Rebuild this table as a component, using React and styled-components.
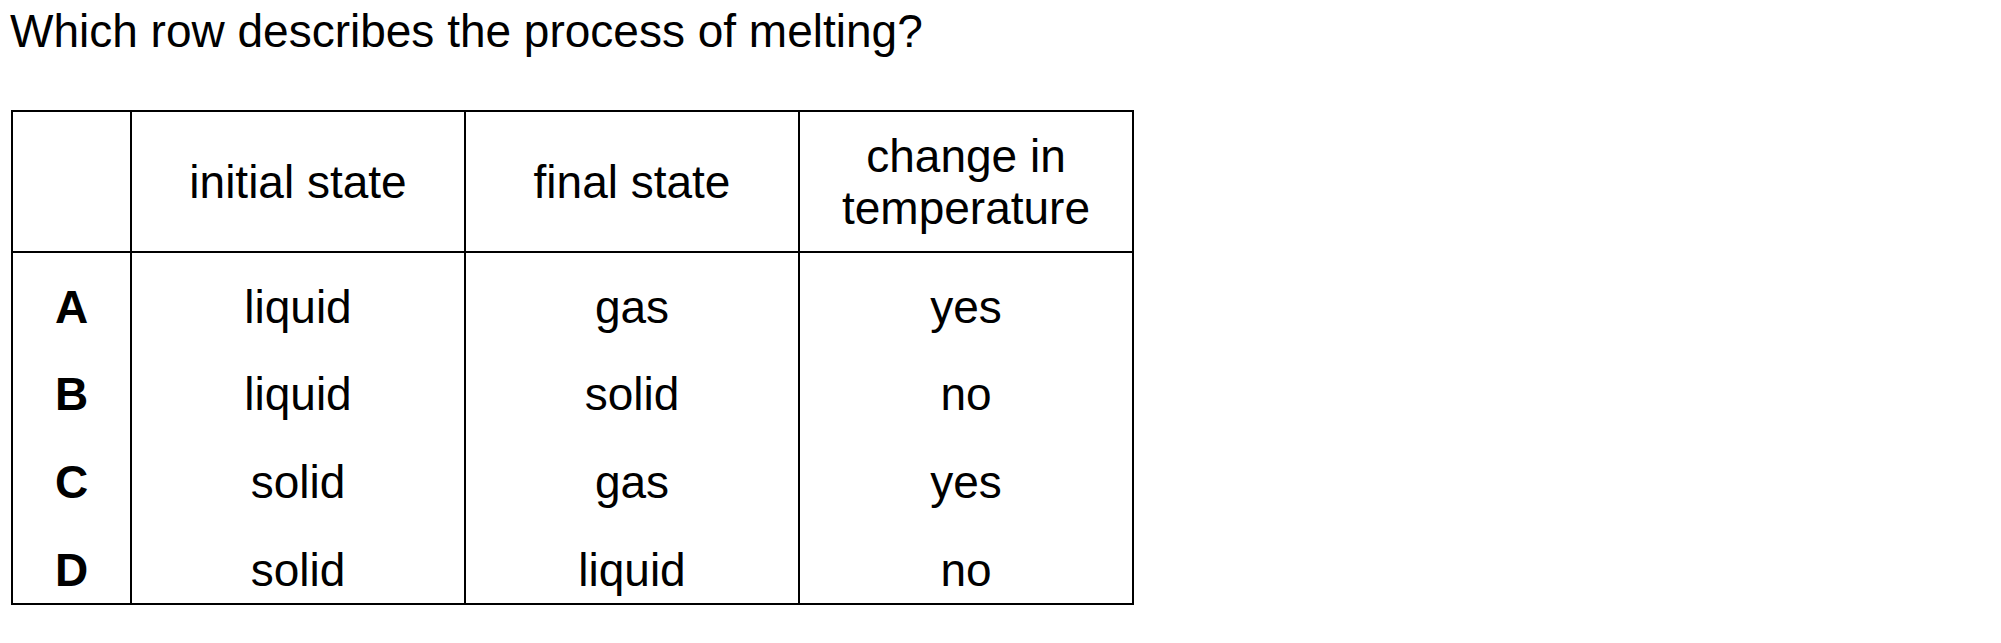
import React from "react";
import styled, { createGlobalStyle } from "styled-components";

const GlobalStyle = createGlobalStyle`
  html, body {
    margin: 0;
    padding: 0;
    background: #fff;
  }
  body {
    font-family: "Liberation Sans", Arial, sans-serif;
    color: #000;
  }
`;

const rows = [
  { key: "A", initial: "liquid", final: "gas", change: "yes" },
  { key: "B", initial: "liquid", final: "solid", change: "no" },
  { key: "C", initial: "solid", final: "gas", change: "yes" },
  { key: "D", initial: "solid", final: "liquid", change: "no" },
];

function App() {
  return (
    <Page>
      <GlobalStyle />
      <Question>Which row describes the process of melting?</Question>
      <Table>
        <colgroup>
          <col style={{ width: "119px" }} />
          <col style={{ width: "334px" }} />
          <col style={{ width: "334px" }} />
          <col style={{ width: "334px" }} />
        </colgroup>
        <thead>
          <tr>
            <Head />
            <Head>initial state</Head>
            <Head>final state</Head>
            <Head>
              change in
              <br />
              temperature
            </Head>
          </tr>
        </thead>
        <tbody>
          {rows.map((r) => (
            <tr key={r.key}>
              <Label>{r.key}</Label>
              <Cell>{r.initial}</Cell>
              <Cell>{r.final}</Cell>
              <Cell>{r.change}</Cell>
            </tr>
          ))}
        </tbody>
      </Table>
    </Page>
  );
}

export default App;

const Page = styled.div`
  padding: 5px 0 0 10px;
`;

const Question = styled.p`
  margin: 0 0 52px 0;
  font-size: 46px;
  line-height: 53px;
`;

const Table = styled.table`
  margin-left: 1px;
  border-collapse: collapse;
  table-layout: fixed;
  width: 1123px;
  border: 2px solid #000;
  font-size: 46px;
`;

const Head = styled.th`
  height: 139px;
  padding: 0;
  border: 2px solid #000;
  font-weight: normal;
  text-align: center;
  vertical-align: middle;
  line-height: 52px;
`;

const Cell = styled.td`
  height: 88px;
  box-sizing: border-box;
  padding: 28px 0 0 0;
  border-left: 2px solid #000;
  border-right: 2px solid #000;
  text-align: center;
  vertical-align: top;
  line-height: 52px;
`;

const Label = styled(Cell)`
  font-weight: bold;
`;
